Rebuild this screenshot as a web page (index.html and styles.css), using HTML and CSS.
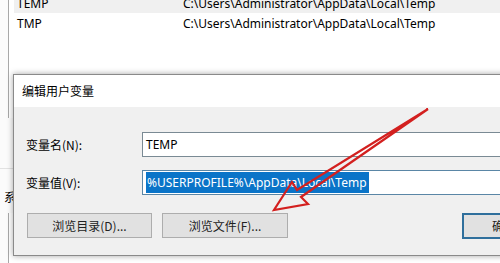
FILE: index.html
```html
<!DOCTYPE html>
<html lang="zh-CN">
<head>
<meta charset="utf-8">
<title>编辑用户变量</title>
<link rel="stylesheet" href="styles.css">
</head>
<body>
<div class="screen">
  <div class="bgwin">
    <div class="userlist">
      <div class="rows">
        <div class="row selected"><span class="name">TEMP</span><span class="val">C:\Users\Administrator\AppData\Local\Temp</span></div>
        <div class="row"><span class="name">TMP</span><span class="val">C:\Users\Administrator\AppData\Local\Temp</span></div>
      </div>
    </div>
    <div class="sep"></div>
    <div class="syslabel">系统变量(S)</div>
    <div class="syslist"></div>
  </div>

  <div class="dialog">
    <div class="titlebar">编辑用户变量</div>
    <div class="body">
      <div class="field">
        <label class="label">变量名(N):</label>
        <div class="input">TEMP</div>
      </div>
      <div class="field">
        <label class="label">变量值(V):</label>
        <div class="input focused"><span class="sel">%USERPROFILE%\AppData\Local\Temp</span></div>
      </div>
      <div class="buttons">
        <div class="btn">浏览目录(D)...</div>
        <div class="btn wide">浏览文件(F)...</div>
        <div class="btn default">确定</div>
      </div>
    </div>
  </div>

  <svg class="arrow" width="500" height="263" viewBox="0 0 500 263">
    <polygon points="428,109 301,197 308,204 274,210 292,182 297,190" fill="none" stroke="#d3201f" stroke-width="2.2" stroke-linejoin="miter"/>
  </svg>
</div>
</body>
</html>
```

FILE: styles.css
```css
html, body {
  margin: 0;
  padding: 0;
}
body {
  width: 500px;
  height: 263px;
  overflow: hidden;
  font-family: "Noto Sans", "Noto Sans CJK SC", sans-serif;
  font-size: 12px;
  color: #000;
}
.screen {
  position: relative;
  width: 500px;
  height: 263px;
  background: #fbfbfb;
  overflow: hidden;
}
.bgwin {
  display: flex;
  flex-direction: column;
  height: 263px;
}
.userlist {
  margin-left: 8px;
  height: 118px;
  border-left: 1px solid #a8a8a8;
  background: #fff;
  overflow: hidden;
}
.rows {
  margin-top: -7px;
  padding-left: 5px;
}
.row {
  display: flex;
  align-items: center;
  height: 20px;
}
.row.selected {
  background: #f0f0f0;
}
.name {
  width: 166px;
  padding-left: 3px;
}
.val {
  white-space: nowrap;
}
.sep {
  margin-top: 50px;
  height: 1px;
  width: 14px;
  background: #e2e2e2;
}
.syslabel {
  margin-top: 21px;
  margin-left: 4px;
  width: 9px;
  height: 14px;
  line-height: 14px;
  overflow: hidden;
  font-family: "Noto Sans CJK SC", sans-serif;
  white-space: nowrap;
}
.syslist {
  margin-top: 9px;
  margin-left: 8px;
  flex: 1;
  border-left: 1px solid #a8a8a8;
  background: #fff;
}
.dialog {
  position: absolute;
  left: 13px;
  top: 74px;
  width: 520px;
  height: 180px;
  border: 1px solid #8a8a8a;
  background: #f0f0f0;
  box-shadow: 0 0 6px rgba(0, 0, 0, 0.35);
  display: flex;
  flex-direction: column;
}
.titlebar {
  height: 32px;
  line-height: 32px;
  padding-left: 8px;
  background: #fff;
  font-family: "Noto Sans CJK SC", sans-serif;
}
.body {
  flex: 1;
  padding: 25px 0 0 12px;
  display: flex;
  flex-direction: column;
}
.field {
  display: flex;
  align-items: center;
  height: 25px;
  margin-bottom: 13px;
}
.label {
  width: 116px;
  font-family: "Noto Sans CJK SC", sans-serif;
}
.input {
  flex: 1;
  height: 23px;
  line-height: 23px;
  border: 1px solid #7a8a94;
  background: #fff;
  padding-left: 3px;
  white-space: nowrap;
}
.input.focused {
  border-color: #5a86a6;
}
.sel {
  background: #0a74c8;
  color: #fff;
  padding: 2px 2px 2px 1px;
}
.buttons {
  display: flex;
  margin-top: 5px;
  padding-left: 1px;
  gap: 10px;
}
.btn {
  flex-shrink: 0;
  width: 123px;
  height: 23px;
  line-height: 23px;
  text-align: center;
  background: #e1e1e1;
  border: 1px solid #adadad;
  font-family: "Noto Sans CJK SC", sans-serif;
  color: #222;
}
.btn.wide {
  width: 124px;
}
.btn.default {
  margin-left: 164px;
  width: 86px;
  height: 22px;
  line-height: 22px;
  border: 2px solid #2f6f9c;
  text-align: left;
  padding-left: 28px;
}
.arrow {
  position: absolute;
  left: 0;
  top: 0;
  pointer-events: none;
}
```
